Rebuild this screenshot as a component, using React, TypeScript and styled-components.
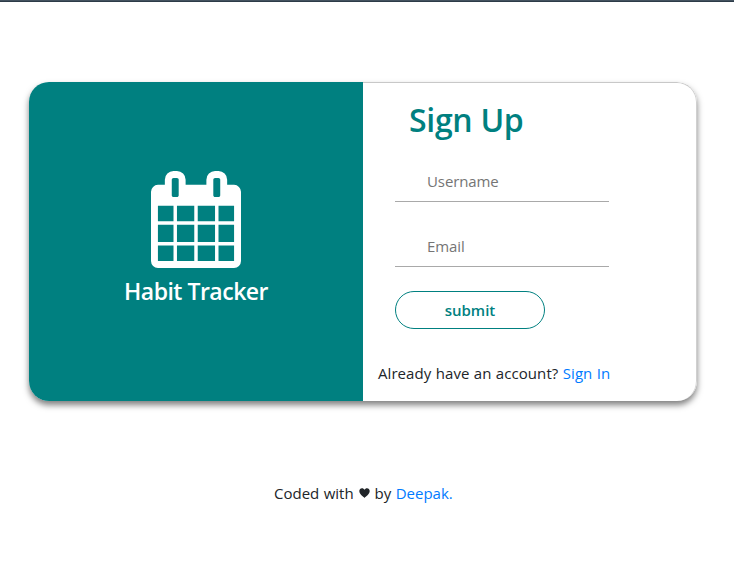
import React from "react";
import styled, { createGlobalStyle } from "styled-components";

const GlobalStyle = createGlobalStyle`
  *, *::before, *::after { box-sizing: border-box; }
  body {
    margin: 0;
    background: #fff;
    color: #212529;
    font: 400 16px/24px "Open Sans", "Noto Sans", sans-serif;
  }
`;

const Page = styled.div`
  height: 578px;
  overflow: hidden;
  display: flex;
  flex-direction: column;
`;

const TopBar = styled.div`
  height: 2px;
  flex: none;
  background: linear-gradient(#43525f 50%, #2c3b48 50%);
`;

const Card = styled.main`
  display: flex;
  flex: none;
  width: 668px;
  height: 319px;
  margin: 80px 0 0 29px;
  border-radius: 20px;
  background: #fff;
  box-shadow: 0 4px 6px rgba(0, 0, 0, 0.5);
  overflow: hidden;
`;

const Brand = styled.section`
  width: 334px;
  flex: none;
  background: #008080;
  color: #fff;
  display: flex;
  flex-direction: column;
  align-items: center;
  padding-top: 89px;
`;

const CalendarIcon = styled.svg`
  display: block;
  width: 90px;
  height: 97px;
  fill: currentColor;
`;

const BrandName = styled.h2`
  margin: 9px 0 0;
  font-size: 23px;
  line-height: 29px;
  font-weight: 600;
  letter-spacing: -0.5px;
  white-space: nowrap;
`;

const Panel = styled.section`
  flex: 1;
  border-top: 1px solid #c8c8c8;
  border-right: 1px solid #d0d0d0;
  border-radius: 0 20px 20px 0;
`;

const Title = styled.h1`
  margin: 18px 0 0 46px;
  font-size: 32px;
  line-height: 38px;
  font-weight: 600;
  letter-spacing: -0.3px;
  color: #008080;
`;

const Form = styled.form`
  display: flex;
  flex-direction: column;
  align-items: flex-start;
  margin: 22px 0 0 32px;
`;

const Field = styled.input`
  display: block;
  width: 214px;
  height: 41px;
  margin-bottom: 24px;
  padding: 0 32px;
  border: 0;
  border-bottom: 1px solid #a9a9a9;
  outline: 0;
  background: transparent;
  font: inherit;
  font-size: 15px;
  letter-spacing: -0.1px;
  &::placeholder { color: #757575; opacity: 1; }
`;

const Submit = styled.button`
  width: 150px;
  height: 38px;
  padding: 0;
  border: 1px solid #008080;
  border-radius: 20px;
  background: transparent;
  color: #008080;
  font: inherit;
  font-size: 15px;
  font-weight: 600;
`;

const Prompt = styled.p`
  margin: 32px 0 0 15px;
  font-size: 15px;
  letter-spacing: 0.07px;
  word-spacing: 0.4px;
  white-space: nowrap;
`;

const Link = styled.a`
  color: #007bff;
  text-decoration: none;
`;

const Footer = styled.footer`
  display: flex;
  align-items: center;
  gap: 5px;
  margin: 80px 0 0 274px;
  font-size: 15px;
  letter-spacing: 0;
  word-spacing: 0.5px;
  white-space: nowrap;
`;

const Heart = styled.svg`
  display: block;
  width: 11px;
  height: 10px;
  fill: currentColor;
`;

export default function App() {
  return (
    <>
      <GlobalStyle />
      <Page>
        <TopBar />
        <Card>
          <Brand>
            <CalendarIcon viewBox="0 0 1664 1792" preserveAspectRatio="none" aria-hidden="true">
              <path d="M128 1664h288v-288h-288v288zm352 0h320v-288h-320v288zm-352-352h288v-320h-288v320zm352 0h320v-320h-320v320zm-352-384h288v-288h-288v288zm736 736h320v-288h-320v288zm-384-736h320v-288h-320v288zm768 736h288v-288h-288v288zm-384-352h320v-320h-320v320zm-352-864v-288q0-13-9.500-22.500t-22.500-9.500h-64q-13 0-22.500 9.500t-9.500 22.500v288q0 13 9.500 22.500t22.500 9.500h64q13 0 22.500-9.500t9.500-22.500zm736 864h288v-320h-288v320zm-384-384h320v-288h-320v288zm384 0h288v-288h-288v288zm32-480v-288q0-13-9.500-22.500t-22.500-9.500h-64q-13 0-22.500 9.500t-9.500 22.500v288q0 13 9.500 22.500t22.500 9.500h64q13 0 22.500-9.500t9.500-22.500zm384-64v1280q0 52-38 90t-90 38h-1408q-52 0-90-38t-38-90v-1280q0-52 38-90t90-38h128v-96q0-66 47-113t113-47h64q66 0 113 47t47 113v96h384v-96q0-66 47-113t113-47h64q66 0 113 47t47 113v96h128q52 0 90 38t38 90z" />
            </CalendarIcon>
            <BrandName>Habit Tracker</BrandName>
          </Brand>
          <Panel>
            <Title>Sign Up</Title>
            <Form onSubmit={(event) => event.preventDefault()}>
              <Field type="text" placeholder="Username" />
              <Field type="email" placeholder="Email" />
              <Submit type="submit">submit</Submit>
            </Form>
            <Prompt>
              Already have an account? <Link href="#">Sign In</Link>
            </Prompt>
          </Panel>
        </Card>
        <Footer>
          <span>Coded with</span>
          <Heart viewBox="0 0 11 10" aria-label="love">
            <path d="M5.500 10C4.300 8.600.300 6.300.300 3.100.300 1.400 1.500.300 3 .300c1.100 0 2 .6 2.500 1.500C6 .9 6.900.300 8 .300c1.500 0 2.700 1.100 2.700 2.800 0 3.200-4 5.500-5.200 6.900z" />
          </Heart>
          <span>
            by <Link href="#">Deepak.</Link>
          </span>
        </Footer>
      </Page>
    </>
  );
}
